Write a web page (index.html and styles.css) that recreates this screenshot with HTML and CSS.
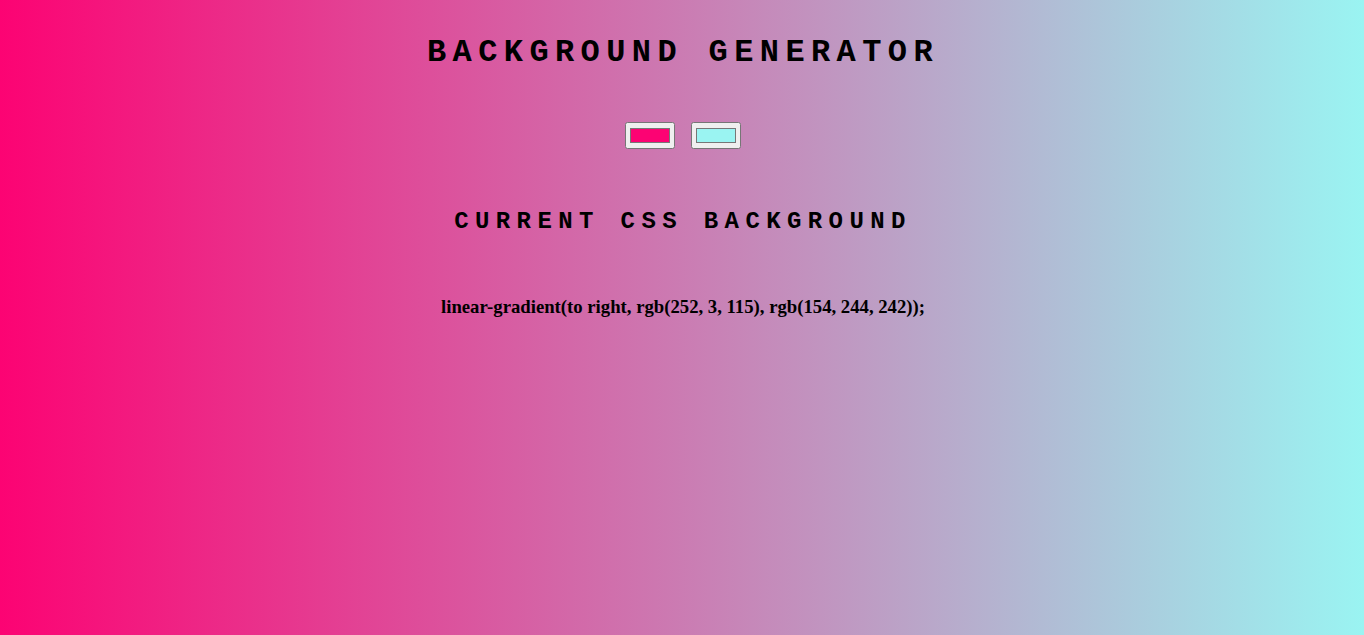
FILE: index.html
```html
<!DOCTYPE html>
<html>
<head>
<meta charset="utf-8">
<title>Background Generator</title>
<link rel="stylesheet" href="styles.css">
</head>
<body class="page">
  <h1 class="title">Background Generator</h1>
  <div class="pickers">
    <input class="color1" type="color" name="color1" value="#fc0373">
    <input class="color2" type="color" name="color2" value="#9af4f2">
  </div>
  <h2 class="subtitle">Current CSS Background</h2>
  <h3 class="css-output">linear-gradient(to right, rgb(252, 3, 115), rgb(154, 244, 242));</h3>
</body>
</html>
```
FILE: styles.css
```css
html {
  height: 100%;
}
.page {
  margin: 0;
  padding: 8px 7px 8px 9px;
  min-height: 100%;
  box-sizing: border-box;
  background: linear-gradient(to right, rgb(252, 3, 115), rgb(154, 244, 242));
  text-align: center;
  font-family: "Liberation Serif", serif;
  color: #000;
}
.title {
  font-family: "Liberation Mono", monospace;
  font-size: 32px;
  font-weight: bold;
  text-transform: uppercase;
  letter-spacing: 6.4px;
  margin: 26px 0 0;
}
.pickers {
  display: flex;
  justify-content: center;
  gap: 16px;
  margin-top: 51px;
}
.pickers input {
  width: 50px;
  height: 27px;
  margin: 0;
}
.subtitle {
  font-family: "Liberation Mono", monospace;
  font-size: 24px;
  font-weight: bold;
  text-transform: uppercase;
  letter-spacing: 6.4px;
  margin: 59px 0 0;
}
.css-output {
  font-size: 18.72px;
  font-weight: bold;
  margin: 61px 0 0;
}
```
